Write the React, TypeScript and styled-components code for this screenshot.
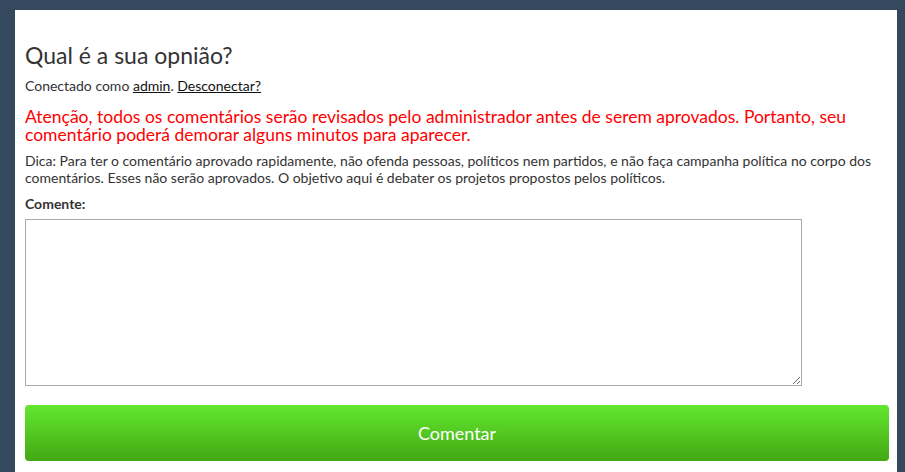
import styled, { createGlobalStyle } from "styled-components";

const GlobalStyle = createGlobalStyle`
    html, body {
        margin: 0;
        padding: 0;
        background: #34495e;
        height: 100%;
        overflow: hidden;
    }
    #root {
        height: 100%;
    }
`;

const Page = styled.div`
    padding: 10px 8px 0 15px;
    height: 100%;
    box-sizing: border-box;
`;

const Panel = styled.section`
    background: #fff;
    height: 100%;
    padding: 30px 8px 0 10px;
    box-sizing: border-box;
    font-family: Lato, "Open Sans", sans-serif;
    color: #333;
`;

const Title = styled.h3`
    margin: 0 0 7px 0;
    font-size: 23px;
    font-weight: 400;
    line-height: 30px;
    color: #333;
`;

const LoggedIn = styled.p`
    margin: 0 0 13px 0;
    font-size: 14px;
    line-height: 18px;

    a {
        color: #111;
        text-decoration: underline;
    }
`;

const Warning = styled.p`
    margin: 0 0 8px 0;
    font-size: 17.5px;
    line-height: 18px;
    color: #ff0000;
`;

const Hint = styled.p`
    margin: 0 0 9px 0;
    font-size: 14px;
    line-height: 17px;
`;

const Label = styled.label`
    display: block;
    font-size: 14px;
    font-weight: 700;
    line-height: 18px;
    margin-bottom: 6px;
`;

const TextArea = styled.textarea`
    display: block;
    width: 777px;
    height: 167px;
    box-sizing: border-box;
    border: 1px solid #aaa;
    margin: 0 0 19px 0;
    padding: 4px;
    font-family: Lato, sans-serif;
    font-size: 14px;
`;

const SubmitButton = styled.button`
    display: block;
    width: 100%;
    height: 56px;
    border: none;
    border-radius: 4px;
    background: linear-gradient(to bottom, #62e82e 0%, #44a714 100%);
    color: #fff;
    font-family: Lato, sans-serif;
    font-size: 18px;
    cursor: pointer;
`;

export default function App() {
    return (
        <>
            <GlobalStyle />
            <Page>
                <Panel>
                    <Title>Qual é a sua opnião?</Title>
                    <LoggedIn>
                        Conectado como <a href="#">admin</a>. <a href="#">Desconectar?</a>
                    </LoggedIn>
                    <Warning>
                        Atenção, todos os comentários serão revisados pelo administrador antes de serem aprovados. Portanto, seu comentário poderá demorar alguns minutos para aparecer.
                    </Warning>
                    <Hint>
                        Dica: Para ter o comentário aprovado rapidamente, não ofenda pessoas, políticos nem partidos, e não faça campanha política no corpo dos comentários. Esses não serão aprovados. O objetivo aqui é debater os projetos propostos pelos políticos.
                    </Hint>
                    <Label htmlFor="comment">Comente:</Label>
                    <TextArea id="comment" />
                    <SubmitButton type="button">Comentar</SubmitButton>
                </Panel>
            </Page>
        </>
    );
}
